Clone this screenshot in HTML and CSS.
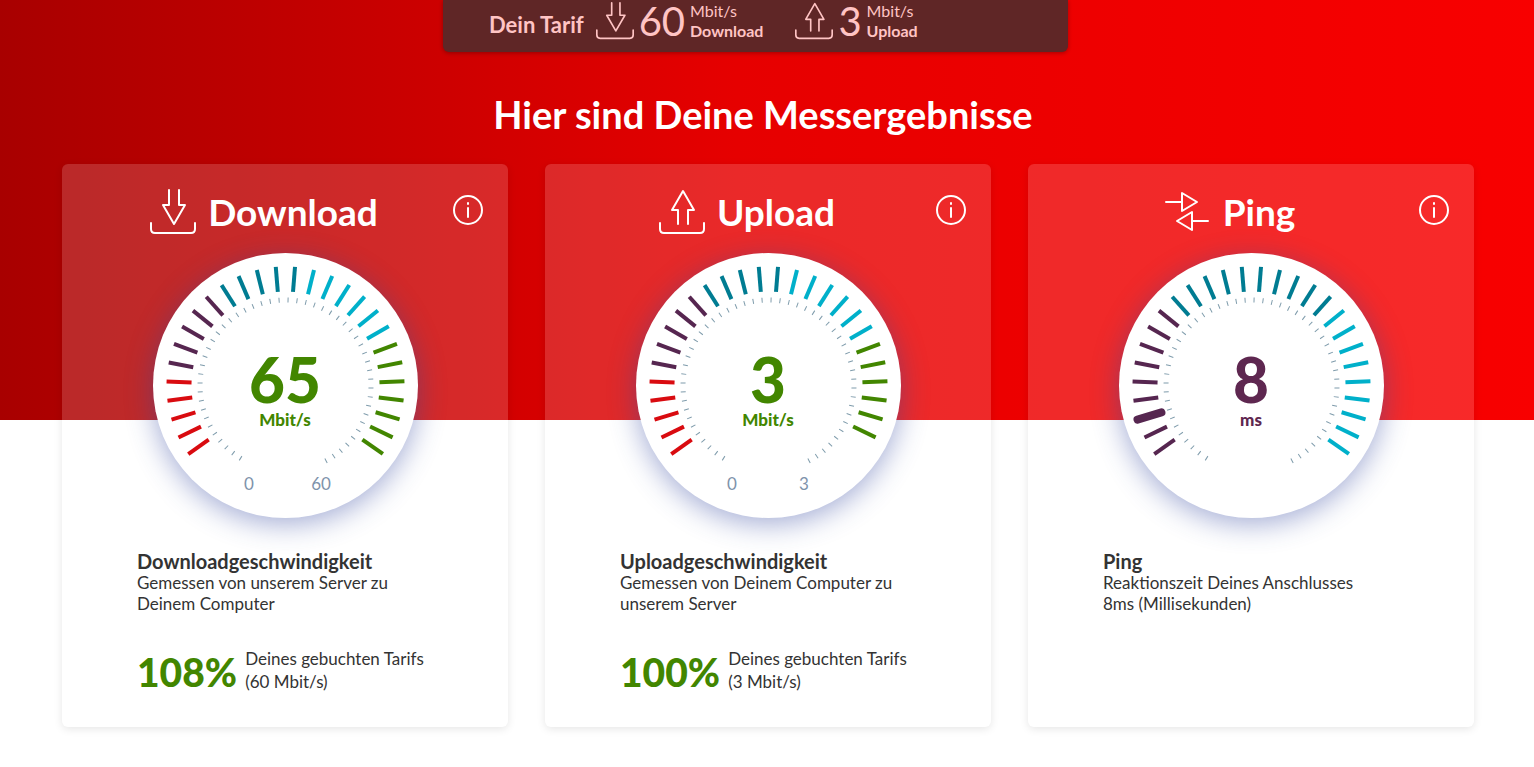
FILE: index.html
```html
<!DOCTYPE html>
<html lang="de">
<head>
  <meta charset="UTF-8">
  <title>Speedtest</title>
  <link rel="stylesheet" href="styles.css">
  <script src="gauge.js" defer></script>
</head>
<body>
  <svg class="sprite" width="0" height="0" aria-hidden="true">
    <symbol id="icon-download" viewBox="0 0 46 46">
      <path d="M1 34v6q0 4 4 4h36q4 0 4-4v-6"/>
      <path d="M19 1v15h-6l11 19 11-19h-6V1"/>
    </symbol>
    <symbol id="icon-upload" viewBox="0 0 46 46">
      <path d="M1 34v6q0 4 4 4h36q4 0 4-4v-6"/>
      <path d="M19 35V21h-6L24 2l11 19h-6v14"/>
    </symbol>
    <symbol id="icon-ping" viewBox="0 0 46 46">
      <path d="M1 13h16M17 4v18l15-9zM43 32H27M27 23v18l-15-9z"/>
    </symbol>
    <symbol id="icon-info" viewBox="0 0 32 32">
      <circle cx="16" cy="16" r="14"/>
      <path d="M16 14v9M16 9v1"/>
    </symbol>
  </svg>

  <main class="page">
    <section class="tariff">
      <strong class="tariff-title">Dein Tarif</strong>
      <div class="tariff-item">
        <svg class="tariff-icon"><use href="#icon-download"/></svg>
        <span class="tariff-value">60</span>
        <span class="tariff-unit">Mbit/s<br><b>Download</b></span>
      </div>
      <div class="tariff-item">
        <svg class="tariff-icon"><use href="#icon-upload"/></svg>
        <span class="tariff-value">3</span>
        <span class="tariff-unit">Mbit/s<br><b>Upload</b></span>
      </div>
    </section>

    <h1>Hier sind Deine Messergebnisse</h1>

    <div class="cards">
      <article class="card">
        <header class="card-head">
          <svg class="card-icon"><use href="#icon-download"/></svg>
          <h2>Download</h2>
          <button class="info" type="button" aria-label="Info Download"><svg><use href="#icon-info"/></svg></button>
        </header>
        <div class="gauge good">
          <svg class="dial" viewBox="0 0 265 265" data-colors="red:5,purple:5,teal:5,cyan:6,green:7"></svg>
          <div class="value">65</div>
          <div class="unit">Mbit/s</div>
          <div class="range"><span>0</span><span>60</span></div>
        </div>
        <div class="text">
          <h3>Downloadgeschwindigkeit</h3>
          <p>Gemessen von unserem Server zu<br>Deinem Computer</p>
          <div class="booked">
            <strong>108%</strong>
            <span>Deines gebuchten Tarifs<br>(60 Mbit/s)</span>
          </div>
        </div>
      </article>

      <article class="card">
        <header class="card-head">
          <svg class="card-icon"><use href="#icon-upload"/></svg>
          <h2>Upload</h2>
          <button class="info" type="button" aria-label="Info Upload"><svg><use href="#icon-info"/></svg></button>
        </header>
        <div class="gauge good">
          <svg class="dial" viewBox="0 0 265 265" data-colors="red:5,purple:5,teal:5,cyan:6,green:6"></svg>
          <div class="value">3</div>
          <div class="unit">Mbit/s</div>
          <div class="range"><span>0</span><span>3</span></div>
        </div>
        <div class="text">
          <h3>Uploadgeschwindigkeit</h3>
          <p>Gemessen von Deinem Computer zu<br>unserem Server</p>
          <div class="booked">
            <strong>100%</strong>
            <span>Deines gebuchten Tarifs<br>(3 Mbit/s)</span>
          </div>
        </div>
      </article>

      <article class="card">
        <header class="card-head">
          <svg class="card-icon"><use href="#icon-ping"/></svg>
          <h2>Ping</h2>
          <button class="info" type="button" aria-label="Info Ping"><svg><use href="#icon-info"/></svg></button>
        </header>
        <div class="gauge ping">
          <svg class="dial" viewBox="0 0 265 265" data-colors="purple:9,teal:10,cyan:9" data-pointer="2"></svg>
          <div class="value">8</div>
          <div class="unit">ms</div>
        </div>
        <div class="text">
          <h3>Ping</h3>
          <p>Reaktionszeit Deines Anschlusses<br>8ms (Millisekunden)</p>
        </div>
      </article>
    </div>
  </main>
</body>
</html>
```
FILE: gauge.js
```js
var SVG = "http://www.w3.org/2000/svg";
var CENTER = 132.5;

function addTick(dial, angle, from, to, className) {
  var line = document.createElementNS(SVG, "line");
  line.setAttribute("x1", CENTER);
  line.setAttribute("x2", CENTER);
  line.setAttribute("y1", CENTER - from);
  line.setAttribute("y2", CENTER - to);
  line.setAttribute("transform", "rotate(" + angle + " " + CENTER + " " + CENTER + ")");
  line.setAttribute("class", className);
  dial.appendChild(line);
}

document.querySelectorAll(".dial").forEach(function (dial) {
  var index = 0;
  // big coloured ticks
  dial.dataset.colors.split(",").forEach(function (part) {
    var color = part.split(":")[0];
    var count = Number(part.split(":")[1]);
    for (var i = 0; i < count; i++) {
      var pointer = dial.dataset.pointer === String(index);
      addTick(dial, -125.2 + index * 9.27, 94, 119, "tick " + color + (pointer ? " pointer" : ""));
      index++;
    }
  });
  // fine inner scale
  for (var k = 0; k < 51; k++) {
    addTick(dial, -148.3 + k * 6, 83, 88, "fine");
  }
});
```
FILE: styles.css
```css
* {
  box-sizing: border-box;
}

body {
  margin: 0;
  font-family: Lato, "Open Sans", sans-serif;
  font-size: 17px;
  line-height: 21px;
  color: #333;
  background: linear-gradient(90deg, #a80000 0%, #e60000 48%, #f80000 100%) top / 100% 420px no-repeat #fff;
}

h1, h2, h3, p {
  margin: 0;
}

svg {
  fill: none;
  stroke: currentColor;
  stroke-width: 2;
  stroke-linecap: round;
  stroke-linejoin: round;
}

.sprite {
  position: absolute;
}

.page {
  padding: 0 60px 40px 62px;
}

.tariff {
  display: flex;
  align-items: center;
  gap: 12px;
  width: 625px;
  height: 52px;
  margin: 0 calc(50% - 300px) 0 auto;
  padding: 0 46px 4px;
  color: #ffc4c4;
  background: #5f2626;
  border-radius: 0 0 6px 6px;
  box-shadow: 0 1px 4px rgba(0, 0, 0, 0.3);
}

.tariff-title {
  font-size: 22px;
}

.tariff-item {
  display: flex;
  align-items: center;
  gap: 5px;
  margin-right: 20px;
  padding-bottom: 6px;
}

.tariff-icon {
  width: 38px;
  height: 38px;
}

.tariff-value {
  font-size: 40px;
}

.tariff-unit {
  font-size: 16px;
  line-height: 20px;
}

h1 {
  padding: 40px 10px 28px 0;
  font-size: 38px;
  line-height: 44px;
  text-align: center;
  color: #fff;
}

.cards {
  display: grid;
  grid-template-columns: repeat(3, 1fr);
  gap: 37px;
}

.card {
  padding-bottom: 34px;
  background: rgba(255, 255, 255, 0.16);
  border-radius: 6px;
  box-shadow: 0 2px 8px rgba(0, 0, 0, 0.1);
}

.card-head {
  position: relative;
  display: flex;
  justify-content: center;
  align-items: center;
  gap: 12px;
  height: 89px;
  padding: 7px 42px 0 0;
  color: #fff;
}

.card-icon {
  width: 46px;
  height: 46px;
}

h2 {
  font-size: 37px;
  line-height: 44px;
}

.info {
  position: absolute;
  top: 30px;
  right: 24px;
  width: 32px;
  height: 32px;
  padding: 0;
  color: #fff;
  background: none;
  border: 0;
}

.info svg {
  display: block;
  width: 32px;
  height: 32px;
}

.gauge {
  position: relative;
  width: 265px;
  height: 265px;
  margin: 0 auto;
  padding-top: 96px;
  text-align: center;
  background: #fff;
  border-radius: 50%;
  box-shadow: 0 6px 28px rgba(50, 70, 160, 0.45);
}

.dial {
  position: absolute;
  inset: 0;
  stroke-linecap: butt;
}

.tick {
  stroke-width: 4;
}

.pointer {
  stroke-width: 8;
  stroke-linecap: round;
}

.fine {
  stroke: #7e9bab;
  stroke-width: 1;
}

.red { stroke: #d90b10; }
.purple { stroke: #562650; }
.teal { stroke: #007c92; }
.cyan { stroke: #00b0ca; }
.green { stroke: #428600; }

.good,
.booked strong {
  color: #428600;
}

.ping {
  color: #5e2750;
}

.value {
  font-size: 62px;
  font-weight: 900;
  line-height: 60px;
}

.unit {
  font-weight: 900;
}

.range {
  display: flex;
  justify-content: center;
  margin-top: 43px;
  color: #7e93ab;
}

.range span {
  width: 72px;
}

.text {
  padding: 32px 20px 0 75px;
}

h3 {
  font-size: 20px;
  line-height: 22px;
}

.booked {
  display: flex;
  align-items: center;
  gap: 8px;
  margin-top: 33px;
  line-height: 23px;
}

.booked strong {
  padding-top: 4px;
  font-size: 39px;
  font-weight: 900;
}
```
